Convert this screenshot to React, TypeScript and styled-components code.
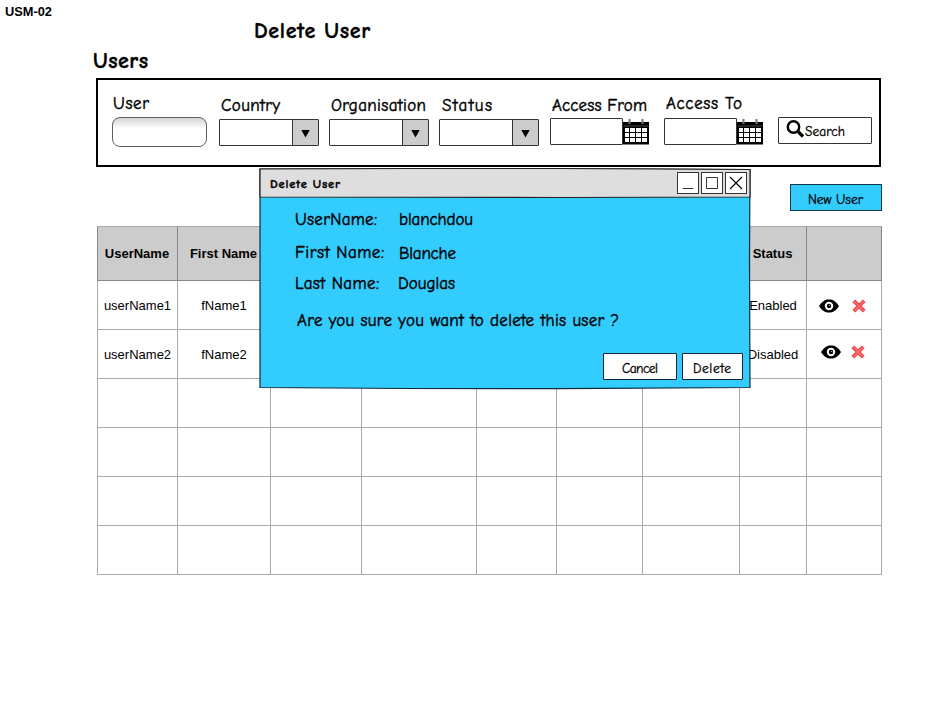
import React, { useLayoutEffect, useRef } from "react";
import styled, { createGlobalStyle, css } from "styled-components";

const Global = createGlobalStyle`
  * { box-sizing: border-box; }
  body { margin: 0; background: #fff; color: #000; font-family: "Liberation Sans", Arial, sans-serif; }
  button { color: #000; }
`;

const TextLine = styled.span<{ $size: number; $bold?: boolean; $width: number }>`
  display: block;
  flex: none;
  width: ${(p) => p.$width}px;
  height: 20px;
  line-height: ${(p) => (p.$bold ? 20 : 21)}px;
  white-space: nowrap;
  font-family: "Comic Sans MS", "Comic Neue", "Open Sans", sans-serif;
  font-size: ${(p) => p.$size}px;
  font-weight: ${(p) => (p.$bold ? 700 : 400)};
  -webkit-text-stroke: ${(p) => (p.$bold ? 0.35 : p.$size < 15 ? 0.3 : 0.45)}px #000;
`;

/* Handwritten-style text whose tracking is tuned so it fills its given width. */
function Note({ children, width, size = 17, bold, className }: {
  children: string; width: number; size?: number; bold?: boolean; className?: string;
}) {
  const ref = useRef<HTMLSpanElement>(null);
  useLayoutEffect(() => {
    const el = ref.current;
    if (!el) return;
    el.style.letterSpacing = "0px";
    const natural = el.getBoundingClientRect().width;
    el.style.letterSpacing = `${(width - natural) / (children.length - 1)}px`;
  }, [children, width, size]);
  return (
    <TextLine $size={size} $bold={bold} $width={width} className={className}>
      <span ref={ref}>{children}</span>
    </TextLine>
  );
}

const Page = styled.main`
  position: relative;
  width: 945px;
  height: 711px;
  overflow: hidden;
  background: #fff;
  padding: 3px 0 0 5px;
`;
const ScreenId = styled.div`
  height: 18px;
  font-size: 13px;
  line-height: 17px;
  font-weight: 700;
  span { display: inline-block; transform: scaleX(0.985); transform-origin: left; }
`;
const PageTitle = styled.div`margin-left: 249px; height: 30px;`;
const SectionTitle = styled.div`margin-left: 88px; height: 27px;`;

const FilterPanel = styled.section`
  display: flex;
  align-items: flex-start;
  width: 785px;
  height: 89px;
  margin-left: 91px;
  border: 2px solid #000;
  padding: 13px 0 0 14px;
`;
const Field = styled.div<{ $width: number; $gap?: number; $top?: number }>`
  flex: none;
  width: ${(p) => p.$width}px;
  margin-right: ${(p) => p.$gap ?? 0}px;
  padding-top: ${(p) => p.$top ?? 0}px;
`;
const FieldLabel = styled.div<{ $indent: number; $height: number }>`
  padding-left: ${(p) => p.$indent}px;
  height: ${(p) => p.$height}px;
`;
const RoundInput = styled.div`
  width: 95px;
  height: 30px;
  border: 1px solid #596166;
  border-radius: 8px;
  background: linear-gradient(#d4d4d4, #fff 38%);
`;
const boxed = css`
  border: 1px solid #333;
  border-radius: 1px;
  background: #fff;
`;
const SelectBox = styled.div`
  ${boxed}
  display: flex;
  justify-content: flex-end;
  width: 100px;
  height: 27px;
`;
const SelectArrow = styled.div`
  display: grid;
  place-items: center;
  width: 26px;
  background: #ccc;
  border-left: 1px solid #333;
  padding-top: 2px;
`;
const DateRow = styled.div`display: flex; align-items: flex-start;`;
const DateBox = styled.div`${boxed} width: 73px; height: 27px; flex: none;`;
const SearchButton = styled.button`
  ${boxed}
  display: flex;
  width: 94px;
  height: 27px;
  margin-top: 24px;
  padding: 2px 0 0 7px;
`;
const SearchText = styled.div`padding-top: 1px; text-align: left;`;

const Toolbar = styled.div`
  display: flex;
  justify-content: flex-end;
  width: 877px;
  height: 59px;
  padding-top: 17px;
`;
const NewUserButton = styled.button`
  width: 92px;
  height: 27px;
  padding: 2px 0 0 17px;
  border: 1px solid #12394a;
  background: #33ccff;
  text-align: left;
`;

const Table = styled.table`
  margin-left: 92px;
  width: 785px;
  table-layout: fixed;
  border-collapse: collapse;
  font-size: 13px;
  text-align: center;
`;
const HeadCell = styled.th<{ $width: number }>`
  width: ${(p) => p.$width}px;
  height: 54px;
  padding: 0 1px 0 0;
  background: #ccc;
  border: 1px solid #888;
  border-top-color: #aaa;
  white-space: nowrap;
`;
const Cell = styled.td`
  height: 49px;
  padding: 1px 0 0;
  border: 1px solid #aaa;
  white-space: nowrap;
`;
const Actions = styled.div<{ $second?: boolean }>`
  display: flex;
  align-items: center;
  gap: ${(p) => (p.$second ? 10 : 13)}px;
  padding-left: ${(p) => (p.$second ? 14 : 12)}px;
  padding-bottom: ${(p) => (p.$second ? 5 : 0)}px;
`;

const Dialog = styled.section`
  position: absolute;
  left: 259px;
  top: 167px;
  width: 492px;
  height: 223px;
`;
const DialogFrame = styled.svg`
  position: absolute;
  inset: 0;
`;
const DialogContent = styled.div`position: relative;`;
const TitleBar = styled.header`
  display: flex;
  justify-content: space-between;
  height: 31px;
  padding: 5px 4px 0 11px;
`;
const WindowTitle = styled.div`padding-top: 2px;`;
const WindowButtons = styled.div`display: flex; gap: 2px;`;
const WindowButton = styled.button`
  width: 22px;
  height: 22px;
  padding: 0;
  border: 1px solid #333;
  background: #fff;
  svg { display: block; }
`;
const DetailRow = styled.div<{ $height: number }>`
  display: grid;
  grid-template-columns: 104px 1fr;
  height: ${(p) => p.$height}px;
  padding-left: 36px;
`;
const Details = styled.div`padding-top: 11px; height: 112px;`;
const Value = styled.div<{ $down?: number; $back?: number }>`
  padding-top: ${(p) => p.$down ?? 0}px;
  margin-left: ${(p) => -(p.$back ?? 0)}px;
`;
const Question = styled.div`padding-left: 38px; height: 43px;`;
const DialogButtons = styled.footer`
  display: flex;
  justify-content: flex-end;
  gap: 5px;
  padding-right: 8px;
`;
const DialogButton = styled.button<{ $width: number; $pad: number }>`
  width: ${(p) => p.$width}px;
  height: 27px;
  padding: 2px 0 0 ${(p) => p.$pad}px;
  border: 1px solid #123;
  border-radius: 1px;
  background: #fff;
  text-align: left;
`;

const Triangle = () => (
  <svg width="9" height="9" viewBox="0 0 9 9"><path d="M0.3 1H8.7L4.5 8.5Z" /></svg>
);
const CalendarIcon = styled.svg`flex: none; margin-left: -1px;`;
const Calendar = () => (
  <CalendarIcon width="27" height="27" viewBox="0 0 27 27">
    <path d="M1 4H27V26.5H1Z" />
    <path d="M7.5 1V6M20.5 1V6" stroke="#777" strokeWidth="2" />
    <path d="M2 8H26" stroke="#777" strokeWidth="0.6" />
    <path fill="#fff" d="M3 10h4v4H3zM8 10h5v4H8zM14 10h5v4h-5zM20 10h5v4h-5zM3 15h4v4H3zM8 15h5v4H8zM14 15h5v4h-5zM20 15h5v4h-5zM3 20h4v4H3zM8 20h5v4H8zM14 20h5v4h-5zM20 20h5v4h-5z" />
  </CalendarIcon>
);
const Magnifier = () => (
  <svg width="19" height="18" viewBox="0 0 19 18" fill="none" stroke="#000">
    <circle cx="7.5" cy="7" r="5.7" strokeWidth="2.4" />
    <path d="M12 11.5L17 16.5" strokeWidth="3.2" />
  </svg>
);
const Eye = () => (
  <svg width="20" height="14" viewBox="0 0 20 14">
    <path d="M0 7C3 2.2 6 0.4 10 0.4S17 2.2 20 7C17 11.8 14 13.6 10 13.6S3 11.8 0 7Z" />
    <circle cx="10" cy="7" r="3.2" fill="none" stroke="#fff" strokeWidth="2" />
    <circle cx="10.4" cy="6.6" r="0.5" fill="#fff" />
  </svg>
);
const Cross = () => (
  <svg width="14" height="14" viewBox="0 0 14 14">
    <path d="M1.8 1.8L12.2 12.2M12.2 1.8L1.8 12.2" stroke="#e64549" strokeWidth="3.8" />
    <path d="M2.2 2.2L11.8 11.8M11.8 2.2L2.2 11.8" stroke="#ff6367" strokeWidth="2" />
  </svg>
);

const columns: [string, number][] = [
  ["UserName", 80], ["First Name", 93], ["", 91], ["", 115], ["", 80],
  ["", 86], ["", 97], ["Status", 67], ["", 75],
];
const users = [
  { userName: "userName1", firstName: "fName1", status: "Enabled" },
  { userName: "userName2", firstName: "fName2", status: "Disabled" },
];
const selects: [string, number, number, number][] = [
  ["Country", 59, 2, 10], ["Organisation", 95, 2, 10], ["Status", 50, 3, 11],
];

export default function App() {
  return (
    <>
      <Global />
      <Page>
        <ScreenId><span>USM-02</span></ScreenId>
        <PageTitle><Note size={22} width={116} bold>Delete User</Note></PageTitle>
        <SectionTitle><Note size={22} width={55} bold>Users</Note></SectionTitle>

        <FilterPanel>
          <Field $width={95} $gap={12}>
            <FieldLabel $indent={1} $height={24}><Note width={36}>User</Note></FieldLabel>
            <RoundInput />
          </Field>
          {selects.map(([label, width, indent, gap]) => (
            <Field key={label} $width={100} $gap={gap} $top={2}>
              <FieldLabel $indent={indent} $height={24}><Note width={width}>{label}</Note></FieldLabel>
              <SelectBox><SelectArrow><Triangle /></SelectArrow></SelectBox>
            </Field>
          ))}
          <Field $width={100} $gap={14} $top={2}>
            <FieldLabel $indent={2} $height={23}><Note width={95}>Access From</Note></FieldLabel>
            <DateRow><DateBox /><Calendar /></DateRow>
          </Field>
          <Field $width={100} $gap={14}>
            <FieldLabel $indent={2} $height={25}><Note width={76}>Access To</Note></FieldLabel>
            <DateRow><DateBox /><Calendar /></DateRow>
          </Field>
          <SearchButton><Magnifier /><SearchText><Note size={13.5} width={40}>Search</Note></SearchText></SearchButton>
        </FilterPanel>

        <Toolbar>
          <NewUserButton><Note size={13.5} width={55}>New User</Note></NewUserButton>
        </Toolbar>

        <Table>
          <thead>
            <tr>{columns.map(([name, width], i) => <HeadCell key={i} $width={width}>{name}</HeadCell>)}</tr>
          </thead>
          <tbody>
            {users.map((user, row) => (
              <tr key={user.userName}>
                <Cell>{user.userName}</Cell>
                <Cell>{user.firstName}</Cell>
                <Cell /><Cell /><Cell /><Cell /><Cell />
                <Cell>{user.status}</Cell>
                <Cell><Actions $second={row === 1}><Eye /><Cross /></Actions></Cell>
              </tr>
            ))}
            {[0, 1, 2, 3].map((row) => (
              <tr key={row}>{columns.map((_, i) => <Cell key={i} />)}</tr>
            ))}
          </tbody>
        </Table>

        <Dialog>
          <DialogFrame width="492" height="223" viewBox="0 0 492 223">
            <path d="M1 2L150 1.5L300 1.5L491 2.5L490.5 90L491 220.5L300 221.7L150 221.5L1 220.5Z" fill="#33ccff" stroke="#0b2b38" strokeWidth="1.2" />
            <path d="M1 2L150 1.5L300 1.5L491 2.5V30L300 30.5L1 30Z" fill="#dedede" stroke="#222" strokeWidth="1.2" />
          </DialogFrame>
          <DialogContent>
            <TitleBar>
              <WindowTitle><Note size={12.5} width={70} bold>Delete User</Note></WindowTitle>
              <WindowButtons>
                <WindowButton><svg width="20" height="20"><path d="M5 15.5H15" stroke="#333" /></svg></WindowButton>
                <WindowButton><svg width="20" height="20"><path d="M4.5 4.5H15.5V15.5H4.5Z" fill="none" stroke="#333" /></svg></WindowButton>
                <WindowButton><svg width="20" height="20"><path d="M4 4L16 16M16 4L4 16" stroke="#000" strokeWidth="1.2" /></svg></WindowButton>
              </WindowButtons>
            </TitleBar>
            <Details>
              <DetailRow $height={33}>
                <Note width={82}>UserName:</Note><Value><Note width={74}>blanchdou</Note></Value>
              </DetailRow>
              <DetailRow $height={31}>
                <Note width={89}>First Name:</Note><Value $down={1}><Note width={57}>Blanche</Note></Value>
              </DetailRow>
              <DetailRow $height={31}>
                <Note width={84}>Last Name:</Note><Value $back={1}><Note width={57}>Douglas</Note></Value>
              </DetailRow>
            </Details>
            <Question><Note width={322}>Are you sure you want to delete this user ?</Note></Question>
            <DialogButtons>
              <DialogButton $width={74} $pad={18}><Note size={13.5} width={36}>Cancel</Note></DialogButton>
              <DialogButton $width={61} $pad={10}><Note size={13.5} width={38}>Delete</Note></DialogButton>
            </DialogButtons>
          </DialogContent>
        </Dialog>
      </Page>
    </>
  );
}
